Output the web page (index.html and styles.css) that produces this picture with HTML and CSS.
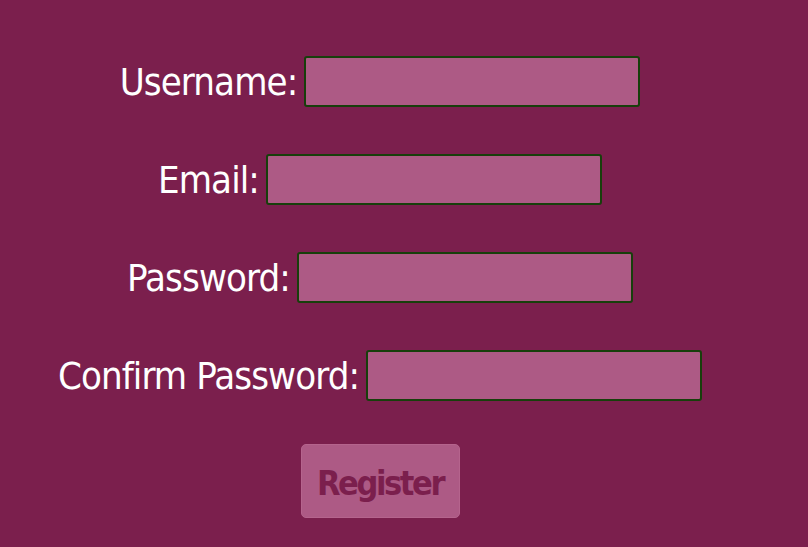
FILE: index.html
```html
<!DOCTYPE html>
<html>
<head>
<meta charset="utf-8">
<link rel="stylesheet" href="styles.css">
</head>
<body>
<form class="form">
  <div class="row"><label class="label">Username:</label><input class="field" type="text"></div>
  <div class="row"><label class="label">Email:</label><input class="field" type="text"></div>
  <div class="row"><label class="label">Password:</label><input class="field" type="password"></div>
  <div class="row"><label class="label">Confirm Password:</label><input class="field" type="password"></div>
  <div class="row actions"><button class="btn" type="button">Register</button></div>
</form>
</body>
</html>
```
FILE: styles.css
```css
html, body {
  margin: 0;
  padding: 0;
  background: #7b1f4d;
  height: 100%;
}
body {
  font-family: "DejaVu Sans Condensed", sans-serif;
}
.form {
  width: 760px;
  padding-top: 56px;
  display: flex;
  flex-direction: column;
  gap: 47px;
}
.row {
  display: flex;
  justify-content: center;
  align-items: center;
  gap: 7px;
  height: 51px;
}
.label {
  color: #ffffff;
  font-size: 38px;
  letter-spacing: -0.9px;
}
.field {
  box-sizing: border-box;
  width: 336px;
  height: 51px;
  margin: 0;
  background: #ad5a85;
  border: 2px solid #173f0b;
  border-radius: 3px;
}
.actions {
  height: 74px;
  margin-top: -4px;
}
.btn {
  width: 159px;
  height: 74px;
  padding: 4px 0 0 0;
  background: #ad5a85;
  color: #7b1f4d;
  border: 1px solid #b5648d;
  border-radius: 5px;
  font-family: "DejaVu Sans Condensed", sans-serif;
  font-weight: bold;
  font-size: 34px;
  letter-spacing: -2.4px;
}
```
